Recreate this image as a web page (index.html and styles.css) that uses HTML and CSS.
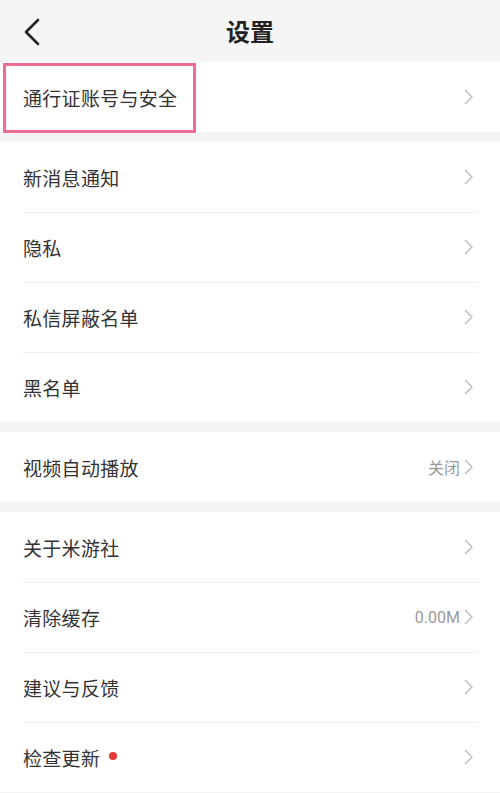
FILE: index.html
```html
<!DOCTYPE html>
<html lang="zh-CN">
<head>
<meta charset="utf-8">
<title>设置</title>
<link rel="stylesheet" href="styles.css">
</head>
<body>
<div class="page">
  <header class="topbar">
    <svg class="back" width="20" height="28" viewBox="0 0 20 28"><path d="M16 2 L4 14 L16 26" fill="none" stroke="#222" stroke-width="2.6" stroke-linecap="round" stroke-linejoin="round"/></svg>
    <h1 class="title">设置</h1>
  </header>

  <section class="group">
    <div class="row highlighted">
      <span class="label">通行证账号与安全</span>
      <svg class="chev" width="10" height="16" viewBox="0 0 10 16"><path d="M1.5 1.5 L8 8 L1.5 14.5" fill="none" stroke="#c2c2c2" stroke-width="1.6" stroke-linecap="round" stroke-linejoin="round"/></svg>
      <div class="mark"></div>
    </div>
  </section>

  <section class="group">
    <div class="row"><span class="label">新消息通知</span><svg class="chev" width="10" height="16" viewBox="0 0 10 16"><path d="M1.5 1.5 L8 8 L1.5 14.5" fill="none" stroke="#c2c2c2" stroke-width="1.6" stroke-linecap="round" stroke-linejoin="round"/></svg></div>
    <div class="row"><span class="label">隐私</span><svg class="chev" width="10" height="16" viewBox="0 0 10 16"><path d="M1.5 1.5 L8 8 L1.5 14.5" fill="none" stroke="#c2c2c2" stroke-width="1.6" stroke-linecap="round" stroke-linejoin="round"/></svg></div>
    <div class="row"><span class="label">私信屏蔽名单</span><svg class="chev" width="10" height="16" viewBox="0 0 10 16"><path d="M1.5 1.5 L8 8 L1.5 14.5" fill="none" stroke="#c2c2c2" stroke-width="1.6" stroke-linecap="round" stroke-linejoin="round"/></svg></div>
    <div class="row"><span class="label">黑名单</span><svg class="chev" width="10" height="16" viewBox="0 0 10 16"><path d="M1.5 1.5 L8 8 L1.5 14.5" fill="none" stroke="#c2c2c2" stroke-width="1.6" stroke-linecap="round" stroke-linejoin="round"/></svg></div>
  </section>

  <section class="group">
    <div class="row"><span class="label">视频自动播放</span><span class="value">关闭</span><svg class="chev" width="10" height="16" viewBox="0 0 10 16"><path d="M1.5 1.5 L8 8 L1.5 14.5" fill="none" stroke="#c2c2c2" stroke-width="1.6" stroke-linecap="round" stroke-linejoin="round"/></svg></div>
  </section>

  <section class="group">
    <div class="row"><span class="label">关于米游社</span><svg class="chev" width="10" height="16" viewBox="0 0 10 16"><path d="M1.5 1.5 L8 8 L1.5 14.5" fill="none" stroke="#c2c2c2" stroke-width="1.6" stroke-linecap="round" stroke-linejoin="round"/></svg></div>
    <div class="row"><span class="label">清除缓存</span><span class="value num">0.00M</span><svg class="chev" width="10" height="16" viewBox="0 0 10 16"><path d="M1.5 1.5 L8 8 L1.5 14.5" fill="none" stroke="#c2c2c2" stroke-width="1.6" stroke-linecap="round" stroke-linejoin="round"/></svg></div>
    <div class="row"><span class="label">建议与反馈</span><svg class="chev" width="10" height="16" viewBox="0 0 10 16"><path d="M1.5 1.5 L8 8 L1.5 14.5" fill="none" stroke="#c2c2c2" stroke-width="1.6" stroke-linecap="round" stroke-linejoin="round"/></svg></div>
    <div class="row"><span class="label">检查更新<i class="dot"></i></span><svg class="chev" width="10" height="16" viewBox="0 0 10 16"><path d="M1.5 1.5 L8 8 L1.5 14.5" fill="none" stroke="#c2c2c2" stroke-width="1.6" stroke-linecap="round" stroke-linejoin="round"/></svg></div>
  </section>
</div>
</body>
</html>
```

FILE: styles.css
```css
* { box-sizing: border-box; }
html, body { margin: 0; padding: 0; }
body {
  background: #f4f4f4;
  font-family: "Noto Sans CJK SC", "Noto Sans", sans-serif;
  color: #333;
  width: 500px;
  height: 793px;
  overflow: hidden;
}
.page { display: flex; flex-direction: column; gap: 10px; }
.topbar {
  height: 62px;
  margin-bottom: -10px;
  background: #f5f5f5;
  display: flex;
  align-items: center;
  justify-content: center;
  position: relative;
}
.back { position: absolute; left: 22px; top: 18px; }
.title {
  margin: 0;
  font-size: 24px;
  font-weight: 700;
  color: #222;
  line-height: 1;
}
.group { background: #fff; }
.row {
  height: 70px;
  display: flex;
  align-items: center;
  padding: 0 26px 0 23px;
  position: relative;
}
.row + .row::before {
  content: "";
  position: absolute;
  left: 23px;
  right: 21px;
  top: 0;
  height: 1px;
  background: #f0f0f0;
}
.label {
  flex: 1;
  font-size: 19px;
  color: #333;
  display: flex;
  align-items: center;
  letter-spacing: 0.3px;
}
.value {
  font-size: 16px;
  color: #999;
  margin-right: 4px;
}
.value.num { font-family: "Roboto", "Noto Sans", sans-serif; font-size: 16px; }
.chev { display: block; flex: none; }
.dot {
  width: 8px;
  height: 8px;
  border-radius: 50%;
  background: #e53935;
  margin-left: 9px;
  margin-top: -3px;
}
.mark {
  position: absolute;
  left: 3px;
  top: 1px;
  width: 193px;
  height: 70px;
  border: 3px solid #f26b92;
  pointer-events: none;
}
```
